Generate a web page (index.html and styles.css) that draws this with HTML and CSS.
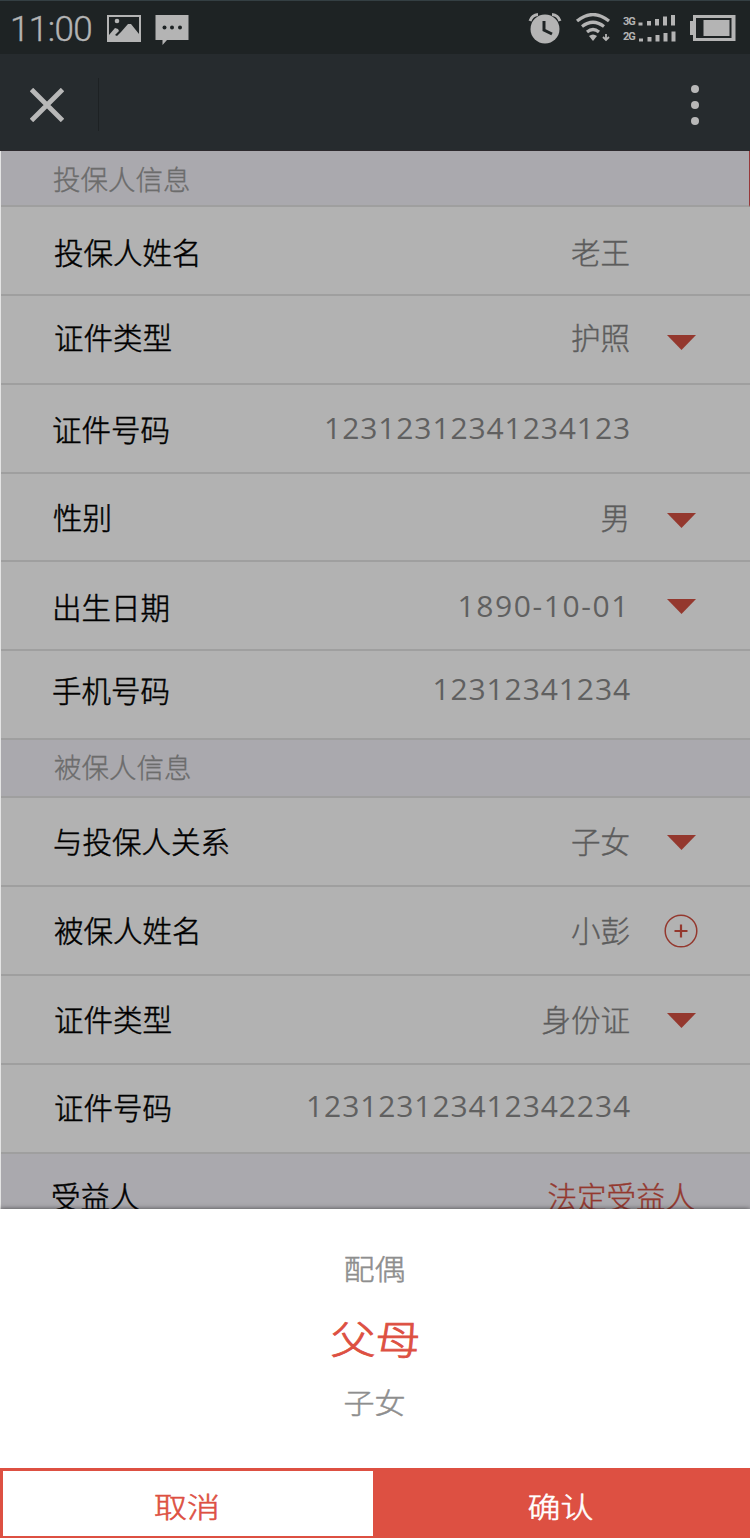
FILE: index.html
```html
<!DOCTYPE html>
<html lang="zh-CN">
<head>
<meta charset="utf-8">
<title>投保人信息</title>
<link rel="stylesheet" href="styles.css">
</head>
<body>
<div class="screen">
  <header class="status">
    <span class="clock">11:00</span>
    <svg class="notices" width="84" height="34" viewBox="0 0 84 34">
      <path fill="#b4b4b4" fill-rule="evenodd" d="M0 1H34V28H0ZM2 3V26H32V3Z"/>
      <path fill="#b4b4b4" d="M2 21L8 14L11 15L12 17L8 21L10 22L14 18L21 10L24 10L32 20V26H2Z"/>
      <circle cx="10" cy="7" r="2.3" fill="#b4b4b4"/>
      <path fill="#b4b4b4" d="M48.500 1H81.500V26H60L55.500 31V26H48.500Z"/>
      <g fill="#1e2324"><circle cx="57.500" cy="13.500" r="2"/><circle cx="65" cy="13.500" r="2"/><circle cx="73" cy="13.500" r="2"/></g>
    </svg>
    <svg class="system" width="210" height="34" viewBox="0 0 210 34">
      <g fill="none" stroke="#b4b4b4">
        <path stroke-width="3" d="M2 8Q4 2 10 1.500M24 1.500Q30 2 32 8"/>
        <path stroke-width="3.200" d="M49 8Q65 -5 81 8M54 13.500Q65 5 76 13.500M59 19Q65 14 71 19"/>
        <path stroke-width="1.800" d="M78 21V27M75 24L78 27L81 24"/>
      </g>
      <circle cx="17" cy="16" r="14.500" fill="#b4b4b4"/>
      <path d="M16 8V17L24 21" fill="none" stroke="#1e2324" stroke-width="3"/>
      <path d="M61 23Q65 20 69 23L65 28Z" fill="#b4b4b4"/>
      <g class="network" fill="#b4b4b4"><text x="95" y="12">3G</text><text x="95" y="27">2G</text></g>
      <g fill="#b4b4b4">
        <path d="M110.500 9.500h4v3h-4zM119 8h4v4.500h-4zM127 6h4v6.500h-4zM135 3.500h4v9h-4zM143 2h4v10.500h-4z"/>
        <path d="M111 25.500h4v3h-4zM119.500 24h4v4.500h-4zM127.500 22h4v6.500h-4zM135.500 20h4v8.500h-4zM143.500 18.500h4v10h-4z"/>
        <path fill-rule="evenodd" d="M165 2H207.500V28H165V22H162V8H165ZM168 5V25H203.500V5Z"/>
        <path d="M175.500 7H201.500V23H175.500Z"/>
      </g>
    </svg>
  </header>
  <nav class="nav">
    <svg class="close" width="34" height="34" viewBox="0 0 34 34"><path d="M1.500 1.500L32.500 32.500M32.500 1.500L1.500 32.500" stroke="#b8b8b8" stroke-width="4.800"/></svg>
    <span class="divider"></span>
    <svg class="more" width="10" height="42" viewBox="0 0 10 42" fill="#b8b8b8"><circle cx="5" cy="5" r="4"/><circle cx="5" cy="21" r="4"/><circle cx="5" cy="37" r="4"/></svg>
  </nav>
  <main class="form">
    <h2 class="section first"><span>投保人信息</span></h2>
    <div class="row name"><span class="label">投保人姓名</span><span class="value">老王</span></div>
    <div class="row id-type"><span class="label">证件类型</span><span class="value">护照</span><i class="arrow"></i></div>
    <div class="row id-number"><span class="label">证件号码</span><span class="value digits">12312312341234123</span></div>
    <div class="row gender"><span class="label">性别</span><span class="value">男</span><i class="arrow"></i></div>
    <div class="row birthday"><span class="label">出生日期</span><span class="value digits date">1890-10-01</span><i class="arrow"></i></div>
    <div class="row phone"><span class="label">手机号码</span><span class="value digits">12312341234</span></div>
    <h2 class="section second"><span>被保人信息</span></h2>
    <div class="row relation"><span class="label">与投保人关系</span><span class="value">子女</span><i class="arrow"></i></div>
    <div class="row insured"><span class="label">被保人姓名</span><span class="value">小彭</span>
      <svg class="add" width="34" height="34" viewBox="0 0 34 34"><circle cx="17" cy="17" r="15.800" fill="none" stroke="#94382e" stroke-width="1.500"/><path d="M10.500 17H23.500M17 10.500V23.500" stroke="#94382e" stroke-width="2.200"/></svg>
    </div>
    <div class="row insured-type"><span class="label">证件类型</span><span class="value">身份证</span><i class="arrow"></i></div>
    <div class="row insured-number"><span class="label">证件号码</span><span class="value digits">123123123412342234</span></div>
    <div class="row beneficiary"><span class="label">受益人</span><span class="value legal">法定受益人</span></div>
  </main>
  <section class="picker">
    <div class="option spouse">配偶</div>
    <div class="option selected">父母</div>
    <div class="option child">子女</div>
  </section>
  <footer class="actions">
    <button class="cancel"><span>取消</span></button>
    <button class="confirm"><span>确认</span></button>
  </footer>
</div>
</body>
</html>
```

FILE: styles.css
```css
* { box-sizing: border-box; }
body { margin: 0; }
.screen {
  width: 750px; height: 1538px; overflow: hidden;
  display: flex; flex-direction: column;
  background: #fff;
  font-family: "Noto Sans CJK SC", sans-serif;
  font-weight: 300;
}
.status {
  height: 54px; flex: none; display: flex; align-items: flex-start;
  background: #1e2324; border-top: 1px solid #343f43;
  padding: 12px 14px 0 10px;
}
.clock {
  width: 97px; margin-top: -3px;
  font: 300 35px/40px Roboto, sans-serif; color: #b4b4b4; letter-spacing: -0.6px;
  -webkit-text-stroke: 0.4px #b4b4b4;
}
.notices { margin-top: 1px; }
.system { margin-left: auto; margin-right: -2px; flex: none; }
.network { font: 700 11px Roboto, sans-serif; letter-spacing: -1px; }
.nav {
  height: 97px; flex: none; display: flex; align-items: center;
  padding: 5px 50px 0 30px; background: #262b2e; border-bottom: 1px solid #2c292d;
}
.divider { width: 1px; height: 53px; margin-left: 34px; background: #1d2123; }
.more { margin-left: auto; }
.form { height: 1058px; flex: none; overflow: hidden; border-left: 1px solid #e4e4e4; }
.section {
  height: 58px; margin: 0; padding: 6px 0 0 53px;
  font-size: 27.5px; font-weight: 300; line-height: 40px;
  color: #6c6c6c; background: #aaa9ae; border-bottom: 2px solid #9f9f9f;
  -webkit-text-stroke: 0.35px currentColor;
}
.first { height: 56px; padding: 7px 0 0 52px; border-right: 1px solid #98383a; }
.row {
  height: 89px; display: flex; align-items: flex-start;
  padding: 24px 0 0 53px;
  font-size: 29.5px; line-height: 40px; color: #000;
  background: #b2b2b2; border-bottom: 2px solid #9f9f9f;
}
.label { -webkit-text-stroke: 0.5px currentColor; }
.value { margin-left: auto; margin-right: 120px; color: #5c5c5c; -webkit-text-stroke: 0.4px currentColor; }
.digits {
  margin-right: 119px; -webkit-text-stroke: 0;
  font-family: "Open Sans", sans-serif; font-size: 30px; letter-spacing: 0.9px; font-weight: 400; color: #606060;
}
.date { letter-spacing: 1.6px; margin-right: 118px; }
.arrow {
  width: 29px; height: 15px; margin-left: -83px; margin-right: 54px;
  background: #94382e; clip-path: polygon(0 0, 100% 0, 50% 100%);
}
.date + .arrow { margin-left: -81px; }
.value:not(.date) + .arrow { margin-left: -83px; }
.add { margin-left: -86px; margin-right: 52px; }
.id-type { padding-top: 20px; }
.id-type .arrow { margin-top: 19px; }
.id-number { padding-top: 23px; padding-left: 51px; }
.gender { height: 88px; padding-top: 22px; padding-left: 52px; }
.gender .arrow { margin-top: 17px; }
.birthday { padding-top: 24px; padding-left: 51px; }
.birthday .arrow { margin-top: 13px; }
.phone { padding-top: 18px; padding-left: 51px; }
.relation { padding-top: 22px; padding-left: 52px; }
.relation .arrow { margin-top: 15px; }
.insured { padding-top: 22px; }
.insured .add { margin-top: 5px; }
.insured-type { padding-top: 22px; }
.insured-type .arrow { margin-top: 15px; }
.insured-number { padding-top: 21px; }
.beneficiary { height: 55px; padding-top: 21px; padding-left: 50px; background: #aaa9ae; border: 0; }
.legal { margin-right: 55px; color: #94382e; }
.picker {
  height: 259px; flex: none; display: flex; flex-direction: column; align-items: center;
  padding: 39px 1px 0 0; background: #fff; box-shadow: 0 0 5px rgba(0,0,0,.6);
}
.option {
  font-size: 31px; line-height: 40px; color: #8e8e8e; transform: scaleY(.92);
  -webkit-text-stroke: 0.5px currentColor;
}
.selected { margin: 20px 0 14px 2px; font-size: 45px; line-height: 60px; color: #dd5042; transform: scaleY(.86); -webkit-text-stroke-width: 1px; }
.actions { height: 70px; flex: none; display: flex; position: relative; }
.cancel, .confirm {
  margin: 0; border: 0; border-radius: 0; padding: 5px 2px 0 0;
  font: 300 33px/40px "Noto Sans CJK SC", sans-serif;
  -webkit-text-stroke: 0.6px currentColor;
}
.cancel span, .confirm span { display: block; transform: scaleY(.86); }
.cancel { width: 374px; background: #fff; color: #dd5042; border: solid #dd5042; border-width: 3px 1px 2px 3px; }
.confirm { flex: 1; background: #dd5042; color: #fff; padding: 5px 3px 0 0; }
```
